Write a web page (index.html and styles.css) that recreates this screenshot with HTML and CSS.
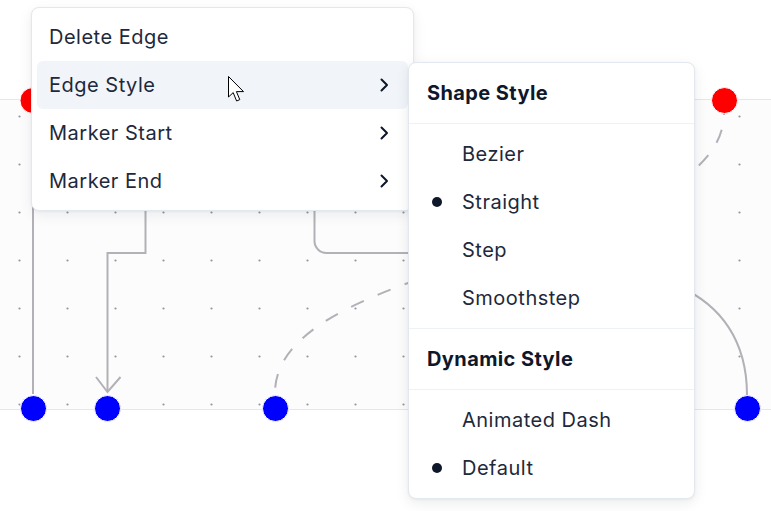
FILE: index.html
```html
<!DOCTYPE html>
<html>
<head>
<meta charset="utf-8">
<link rel="stylesheet" href="styles.css">
</head>
<body>
<div class="page">
  <div class="canvas"></div>

  <svg class="diagram" width="771" height="511" viewBox="0 0 771 511">
    <defs>
      <pattern id="dots" patternUnits="userSpaceOnUse" x="0" y="0" width="48" height="48">
        <circle cx="19.5" cy="20.5" r="1.1" fill="#94949c"/>
      </pattern>
    </defs>
    <rect x="0" y="100" width="771" height="308" fill="url(#dots)"/>
    <g fill="none" stroke="#b1b1b7" stroke-width="2">
      <path d="M33 113 V394"/>
      <path d="M145.5 140 V253 H107.5 V392"/>
      <path d="M96 377 L107.5 392 L120.5 377"/>
      <path d="M314.5 140 V241 A12 12 0 0 0 326.5 253 H430"/>
      <path d="M724 113 C724 253 275 253 275 393" stroke-dasharray="14 15" stroke-dashoffset="12"/>
      <path d="M680 287 C720 305 747 340 747 395"/>
    </g>
    <g stroke="#ffffff" stroke-width="1">
      <circle cx="33" cy="100.5" r="13" fill="#ff0000"/>
      <circle cx="724.5" cy="100.5" r="13" fill="#ff0000"/>
      <circle cx="33.5" cy="408.5" r="13" fill="#0000ff"/>
      <circle cx="107.5" cy="408.5" r="13" fill="#0000ff"/>
      <circle cx="275.5" cy="408.5" r="13" fill="#0000ff"/>
      <circle cx="747.5" cy="408.5" r="13" fill="#0000ff"/>
    </g>
  </svg>

  <div class="menu">
    <div class="item">Delete Edge</div>
    <div class="item active">Edge Style
      <svg class="chev" width="16" height="16" viewBox="0 0 16 16"><polyline points="5.5,2.5 11,8 5.5,13.5"/></svg>
    </div>
    <div class="item">Marker Start
      <svg class="chev" width="16" height="16" viewBox="0 0 16 16"><polyline points="5.5,2.5 11,8 5.5,13.5"/></svg>
    </div>
    <div class="item">Marker End
      <svg class="chev" width="16" height="16" viewBox="0 0 16 16"><polyline points="5.5,2.5 11,8 5.5,13.5"/></svg>
    </div>
  </div>

  <div class="submenu">
    <div class="group">
      <div class="label">Shape Style</div>
    </div>
    <div class="group">
      <div class="option"><span class="mark"></span>Bezier</div>
      <div class="option"><span class="mark on"></span>Straight</div>
      <div class="option"><span class="mark"></span>Step</div>
      <div class="option"><span class="mark"></span>Smoothstep</div>
    </div>
    <div class="group">
      <div class="label">Dynamic Style</div>
    </div>
    <div class="group">
      <div class="option"><span class="mark"></span>Animated Dash</div>
      <div class="option"><span class="mark on"></span>Default</div>
    </div>
  </div>

  <svg class="cursor" width="20" height="28" viewBox="0 0 20 28">
    <path d="M0.5 0.5 V21 L5.2 16.6 L8.6 25 L11.8 23.6 L8.4 15.6 H15.5 Z" fill="#ffffff" stroke="#000000" stroke-width="1" stroke-linejoin="miter"/>
  </svg>
</div>
</body>
</html>
```

FILE: styles.css
```css
* {
  box-sizing: border-box;
}

html, body {
  margin: 0;
  padding: 0;
  background: #ffffff;
}

body {
  font-family: "Inter", "Noto Sans", sans-serif;
  width: 771px;
  height: 511px;
  overflow: hidden;
}

.page {
  position: relative;
  width: 771px;
  height: 511px;
  padding-top: 99px;
}

.canvas {
  height: 311px;
  background: #fcfcfd;
  border-top: 1px solid #e2e8f0;
  border-bottom: 1px solid #e2e8f0;
}

.diagram {
  position: absolute;
  left: 0;
  top: 0;
}

.menu {
  position: absolute;
  left: 31px;
  top: 7px;
  width: 383px;
  padding: 5px;
  background: #ffffff;
  border: 1px solid #e2e8f0;
  border-radius: 8px;
  box-shadow: 0 4px 14px rgba(15, 23, 42, 0.07), 0 1px 3px rgba(15, 23, 42, 0.05);
}

.item {
  height: 48px;
  display: flex;
  align-items: center;
  justify-content: space-between;
  padding: 0 16px 0 12px;
  font-size: 20px;
  letter-spacing: 0.5px;
  line-height: 24px;
  color: #1e293b;
  border-radius: 6px;
}

.item.active {
  background: #f1f5f9;
}

.chev polyline {
  fill: none;
  stroke: #0f172a;
  stroke-width: 2;
  stroke-linecap: round;
  stroke-linejoin: round;
}

.submenu {
  position: absolute;
  left: 408px;
  top: 62px;
  width: 287px;
  background: #ffffff;
  border: 1px solid #e2e8f0;
  border-radius: 8px;
  box-shadow: 0 4px 14px rgba(15, 23, 42, 0.08), 0 1px 3px rgba(15, 23, 42, 0.05);
}

.group {
  padding: 6px;
}

.group + .group {
  border-top: 1px solid #eef2f6;
}

.label {
  height: 48px;
  display: flex;
  align-items: center;
  padding-left: 12px;
  font-size: 20px;
  letter-spacing: 0.4px;
  line-height: 24px;
  font-weight: 700;
  color: #0f172a;
}

.option {
  height: 48px;
  display: flex;
  align-items: center;
  padding-left: 12px;
  font-size: 20px;
  letter-spacing: 0.5px;
  line-height: 24px;
  color: #1e293b;
}

.mark {
  width: 35px;
  flex: none;
  display: flex;
  align-items: center;
}

.mark.on::before {
  content: "";
  width: 10px;
  height: 10px;
  margin-left: 5px;
  border-radius: 50%;
  background: #0f172a;
}

.cursor {
  position: absolute;
  left: 228px;
  top: 76px;
}
```
